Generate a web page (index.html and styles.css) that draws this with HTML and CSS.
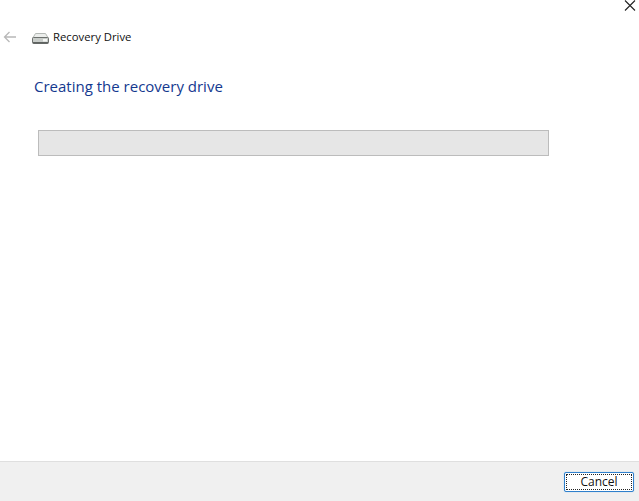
FILE: index.html
```html
<!DOCTYPE html>
<html lang="en">
<head>
    <meta charset="UTF-8">
    <title>Recovery Drive</title>
    <link rel="stylesheet" href="styles.css">
</head>
<body>
<div class="window">
    <div class="close-row">
        <svg class="close-icon" width="12" height="12" viewBox="0 0 12 12">
            <path d="M1 .5L11 10.5M11 .5L1 10.5" stroke="#222" stroke-width="1.1" fill="none"/>
        </svg>
    </div>

    <div class="title-row">
        <svg class="back-icon" width="14" height="12" viewBox="0 0 14 12">
            <path d="M13 6H1.5M6.5 1L1.5 6l5 5" stroke="#b8b8b8" stroke-width="1.3" fill="none"/>
        </svg>
        <svg class="drive-icon" width="17" height="11" viewBox="0 0 17 11">
            <path d="M3.5 .5h10l3 5H.5z" fill="#eceeec" stroke="#b4b8b5"/>
            <rect x=".5" y="4.5" width="16" height="6" rx="1" fill="#c9cdca" stroke="#6d716e"/>
            <rect x="1" y="9" width="15" height="1.5" fill="#5f6360"/>
            <rect x="11" y="6" width="4" height="2.5" fill="#f4f6f4"/>
        </svg>
        <span class="app-title">Recovery Drive</span>
    </div>

    <div class="content">
        <h1 class="heading">Creating the recovery drive</h1>
        <div class="progress"></div>
    </div>

    <div class="footer">
        <button class="cancel" type="button"><span class="cancel-focus">Cancel</span></button>
    </div>
</div>
</body>
</html>
```

FILE: styles.css
```css
html, body {
    margin: 0;
    padding: 0;
    background: #fff;
}
.window {
    width: 639px;
    height: 501px;
    display: flex;
    flex-direction: column;
    font-family: "Open Sans", "Noto Sans", sans-serif;
    overflow: hidden;
}
.close-row {
    height: 13px;
    display: flex;
    justify-content: flex-end;
    align-items: flex-start;
    padding-right: 3px;
}
.close-icon {
    display: block;
}
.title-row {
    height: 47px;
    display: flex;
    align-items: center;
    padding-left: 3px;
}
.back-icon {
    margin-right: 15px;
}
.drive-icon {
    margin-right: 4px;
    margin-top: 4px;
}
.app-title {
    font-size: 11.3px;
    color: #111;
}
.content {
    flex: 1;
    padding-left: 34px;
}
.heading {
    margin: 0;
    font-size: 15px;
    line-height: 22px;
    font-weight: 400;
    color: #14398f;
    margin-top: 15px;
}
.progress {
    width: 509px;
    height: 24px;
    margin-top: 33px;
    margin-left: 4px;
    background: #e6e6e6;
    border: 1px solid #bcbcbc;
}
.footer {
    height: 40px;
    box-sizing: border-box;
    border-top: 1px solid #dfdfdf;
    background: #f0f0f0;
    display: flex;
    justify-content: flex-end;
    align-items: flex-start;
    padding: 10px 5px 0 0;
}
.cancel {
    width: 70px;
    height: 20px;
    padding: 1px;
    background: #fff;
    border: 1px solid #2f80cc;
    border-radius: 2px;
    box-shadow: 0 0 1px #7fb4e4;
    font-family: inherit;
    font-size: 12px;
    color: #111;
}
.cancel-focus {
    display: block;
    height: 100%;
    box-sizing: border-box;
    line-height: 14px;
    border: 1px dotted #222;
}
```
